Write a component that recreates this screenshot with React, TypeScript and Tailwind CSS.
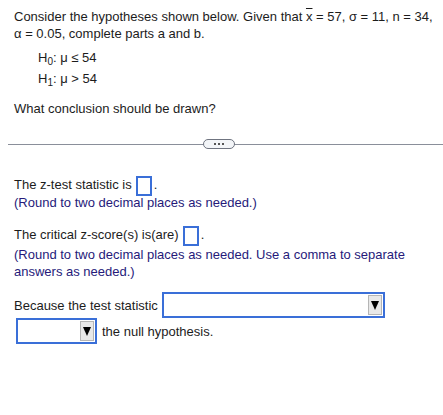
import React from "react";

function Box() {
  return <span className="inline-block align-middle w-[16px] h-[20px] -my-[3px] border-2 border-[#3a6fd8] bg-white ml-[4px] mr-[2px]" />;
}

function Select({ w }: { w: string }) {
  return (
    <span className={`inline-flex items-center justify-end ${w} h-[26px] border-2 border-[#3a6fd8] bg-white align-middle`}>
      <span className="w-[14px] h-[20px] mr-[1px] bg-[#e8e8e8] border border-[#b5b5b5] flex items-center justify-center">
        <svg width="8" height="9" viewBox="0 0 8 9"><path d="M0 0 L8 0 L4 9 Z" fill="#000" /></svg>
      </span>
    </span>
  );
}

export default function App() {
  return (
    <div className="w-[443px] h-[415px] bg-white text-[13px] leading-[17px] text-[#1c1c1c]" style={{ fontFamily: '"Liberation Sans", Arial, sans-serif' }}>
      <div className="pl-[14px] pr-2 pt-[8px]">
        <p>
          Consider the hypotheses shown below. Given that <span className="overline">x</span> = 57, σ = 11, n = 34,
          <br />α = 0.05, complete parts a and b.
        </p>
        <div className="pl-[24px] mt-[7px]">
          <div className="h-[21px]">H<sub className="text-[10px]">0</sub>: μ ≤ 54</div>
          <div className="h-[21px]">H<sub className="text-[10px]">1</sub>: μ &gt; 54</div>
        </div>
        <p className="mt-[9px]">What conclusion should be drawn?</p>
      </div>
      <div className="relative mt-[22px] ml-[8px] h-[10px] flex items-center">
        <div className="w-full h-px bg-[#8a8f9a]" />
        <div className="absolute left-[195px] top-0 w-[32px] h-[10px] rounded-full border border-[#6f7480] bg-[#f3f5f8] flex items-center justify-center gap-[2px]">
          <span className="w-[2px] h-[2px] bg-[#555]" />
          <span className="w-[2px] h-[2px] bg-[#555]" />
          <span className="w-[2px] h-[2px] bg-[#555]" />
        </div>
      </div>
      <div className="pl-[14px] pr-2">
        <p className="mt-[26px] leading-[19px]">The z-test statistic is<Box />.</p>
        <p className="text-[#261a7a]">(Round to two decimal places as needed.)</p>
        <p className="mt-[14px] leading-[19px]">The critical z-score(s) is(are)<Box />.</p>
        <p className="text-[#261a7a] mt-[2px]">(Round to two decimal places as needed. Use a comma to separate answers as needed.)</p>
        <div className="mt-[12px] flex items-center gap-[4px]">
          <span>Because the test statistic</span>
          <Select w="w-[223px]" />
        </div>
        <div className="flex items-center gap-[5px] mt-0 ml-[2px]">
          <Select w="w-[81px]" />
          <span>the null hypothesis.</span>
        </div>
      </div>
    </div>
  );
}
